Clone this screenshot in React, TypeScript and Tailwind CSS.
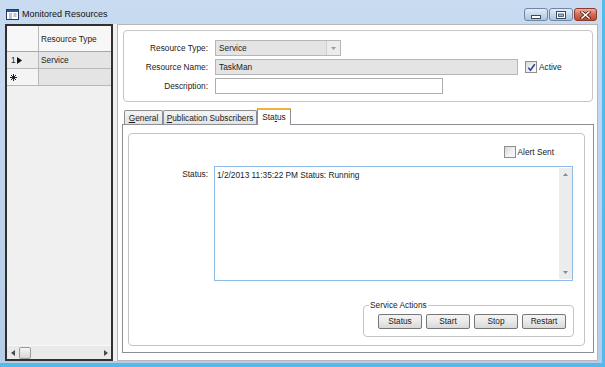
import type { ReactNode } from 'react'

// small Win7-style window: Monitored Resources

function CheckBox({ checked }: { checked?: boolean }) {
  return (
    <span className="w-[12px] h-[12px] border border-[#8e8f8f] bg-gradient-to-br from-[#d8d8d8] via-[#efefef] to-[#fbfbfb] flex items-center justify-center shrink-0">
      {checked && (
        <svg width="9" height="9" viewBox="0 0 9 9">
          <path d="M1.3 4.6 L3.4 7.2 L7.8 1.2" fill="none" stroke="#2c3f8c" strokeWidth="1.5" />
        </svg>
      )}
    </span>
  )
}

function ActionButton({ label }: { label: string }) {
  return (
    <button className="w-[44px] h-[15px] border border-[#767676] rounded-[2px] bg-gradient-to-b from-[#f4f4f4] via-[#eaeaea] to-[#d9d9d9] flex items-center justify-center leading-none text-[#1b1b1b]">
      {label}
    </button>
  )
}

function Tab({ children, width, selected }: { children: ReactNode; width: string; selected?: boolean }) {
  if (selected) {
    return (
      <div
        className={`${width} h-[17px] -mb-px relative z-10 bg-white border-x border-[#8c8e94] border-t-2 border-t-[#f2b33d] flex items-center justify-center pb-[1px]`}
      >
        {children}
      </div>
    )
  }
  return (
    <div
      className={`${width} h-[14px] border border-b-0 border-[#8c8e94] rounded-t-[2px] bg-gradient-to-b from-[#f4f4f4] to-[#e3e3e3] flex items-center justify-center`}
    >
      {children}
    </div>
  )
}

function TitleButton({ kind }: { kind: 'min' | 'max' | 'close' }) {
  const base =
    kind === 'close'
      ? 'w-[23px] border-[#8a3a2c] bg-gradient-to-b from-[#eab0a2] via-[#d36a52] to-[#c5452c]'
      : 'w-[24px] border-[#6f86a6] bg-gradient-to-b from-[#e3ecf7] via-[#c8d8ec] to-[#adc4e2]'
  return (
    <div className={`${base} h-[13px] border rounded-[3px] flex items-center justify-center`}>
      {kind === 'min' && (
        <svg width="10" height="4" viewBox="0 0 10 4" className="mt-[4px]">
          <rect x="0.5" y="0.5" width="9" height="3" fill="#ffffff" stroke="#3c4a5e" />
        </svg>
      )}
      {kind === 'max' && (
        <svg width="10" height="8" viewBox="0 0 10 8">
          <rect x="0.5" y="0.5" width="9" height="7" fill="#ffffff" stroke="#3c4a5e" />
          <rect x="2.5" y="3" width="5" height="2.5" fill="#9fb4d0" stroke="#3c4a5e" strokeWidth="0.8" />
        </svg>
      )}
      {kind === 'close' && (
        <svg width="11" height="8" viewBox="0 0 11 8">
          <path d="M2 1 L9 7 M9 1 L2 7" stroke="#4a1a12" strokeWidth="3" strokeLinecap="square" />
          <path d="M2 1 L9 7 M9 1 L2 7" stroke="#ffffff" strokeWidth="1.6" strokeLinecap="square" />
        </svg>
      )}
    </div>
  )
}

function ResourceGrid() {
  return (
    <div className="w-[108px] border-2 border-[#303030] bg-[#f0f0f0] flex flex-col">
      <div className="h-[26px] flex border-b border-[#a9a9a9] bg-[#f7f7f7]">
        <div className="w-[32px] border-r border-[#b9b9b9]" />
        <div className="flex-1 flex items-center pl-[2px]">Resource Type</div>
      </div>
      <div className="h-[17px] flex border-b border-[#b9b9b9]">
        <div className="w-[32px] border-r border-[#b9b9b9] bg-[#ececec] flex items-center pl-[4px] gap-[1px]">
          <span>1</span>
          <svg width="5" height="7" viewBox="0 0 5 7">
            <path d="M0 0 L5 3.5 L0 7 Z" fill="#111" />
          </svg>
        </div>
        <div className="flex-1 flex items-center pl-[2px] bg-[#e4e4e4]">Service</div>
      </div>
      <div className="h-[17px] flex border-b border-[#b9b9b9]">
        <div className="w-[32px] border-r border-[#b9b9b9] bg-[#f4f4f4] flex items-center pl-[3px]">
          <svg width="7" height="7" viewBox="0 0 7 7">
            <path d="M3.5 0 V7 M0 3.5 H7 M1 1 L6 6 M6 1 L1 6" stroke="#222" strokeWidth="1" />
          </svg>
        </div>
        <div className="flex-1 bg-[#e4e4e4]" />
      </div>
      <div className="flex-1" />
      <div className="h-[14px] border-t border-[#f8f8f8] bg-[#e9e9e9] flex items-center pl-[4px] pr-[3px]">
        <svg width="4" height="6" viewBox="0 0 4 6">
          <path d="M4 0 L0 3 L4 6 Z" fill="#4a4a4a" />
        </svg>
        <div className="ml-[4px] w-[12px] h-[12px] border border-[#9b9b9b] rounded-[2px] bg-gradient-to-b from-[#f5f5f5] to-[#d8d8d8]" />
        <div className="flex-1" />
        <svg width="4" height="6" viewBox="0 0 4 6">
          <path d="M0 0 L4 3 L0 6 Z" fill="#4a4a4a" />
        </svg>
      </div>
    </div>
  )
}

function HeaderGroup() {
  return (
    <div className="h-[72px] ml-[1px] mr-[1px] border border-[#c6c6c6] rounded-[4px] pt-[9px] flex flex-col gap-[3px]">
      <div className="flex items-center h-[16px]">
        <div className="w-[84px] text-right">Resource Type:</div>
        <div className="ml-[7px] w-[126px] h-[16px] border border-[#b6b6b6] bg-[#e4e4e4] flex">
          <div className="flex-1 flex items-center pl-[3px]">Service</div>
          <div className="w-[14px] border-l border-[#cfcfcf] bg-[#ececec] flex items-center justify-center">
            <svg width="5" height="3" viewBox="0 0 5 3">
              <path d="M0 0 L5 0 L2.5 3 Z" fill="#9a9a9a" />
            </svg>
          </div>
        </div>
      </div>
      <div className="flex items-center h-[16px]">
        <div className="w-[84px] text-right">Resource Name:</div>
        <div className="ml-[7px] w-[303px] h-[16px] border border-[#b6b6b6] bg-[#e4e4e4] flex items-center pl-[3px]">
          TaskMan
        </div>
        <div className="ml-[7px] flex items-center gap-[2px]">
          <CheckBox checked />
          <span>Active</span>
        </div>
      </div>
      <div className="flex items-center h-[16px]">
        <div className="w-[84px] text-right">Description:</div>
        <div className="ml-[7px] w-[228px] h-[16px] border border-[#acacac] bg-white" />
      </div>
    </div>
  )
}

function StatusPage() {
  return (
    <div className="flex-1 border border-[#8c8e94] bg-white pl-[5px] pt-[8px] pr-[8px] pb-[6px] flex">
      <div className="flex-1 border border-[#c4c4c4] rounded-[4px] flex flex-col">
        <div className="mt-[12px] h-[12px] flex justify-end items-center pr-[30px] gap-[2px]">
          <CheckBox />
          <span>Alert Sent</span>
        </div>
        <div className="mt-[8px] flex">
          <div className="w-[79px] text-right pt-[3px]">Status:</div>
          <div className="ml-[6px] w-[359px] h-[115px] border border-[#8fbbe8] flex">
            <div className="flex-1 pl-[2px] pt-[3px]">1/2/2013 11:35:22 PM Status: Running</div>
            <div className="w-[13px] mt-[1px] mb-[1px] bg-[#ececec] flex flex-col items-center justify-between py-[5px]">
              <svg width="5" height="3" viewBox="0 0 5 3">
                <path d="M0 3 L5 3 L2.5 0 Z" fill="#8a8a8a" />
              </svg>
              <svg width="5" height="3" viewBox="0 0 5 3">
                <path d="M0 0 L5 0 L2.5 3 Z" fill="#8a8a8a" />
              </svg>
            </div>
          </div>
        </div>
        <fieldset className="mt-[19px] self-end mr-[10px] w-[211px] border border-[#c4c4c4] rounded-[4px] pb-[7px]">
          <legend className="ml-[5px] px-[1px] leading-[10px]">Service Actions</legend>
          <div className="pl-[14px] pt-[4px] flex gap-[4px]">
            <ActionButton label="Status" />
            <ActionButton label="Start" />
            <ActionButton label="Stop" />
            <ActionButton label="Restart" />
          </div>
        </fieldset>
      </div>
    </div>
  )
}

export default function App() {
  return (
    <div className="w-[605px] h-[367px] flex flex-col overflow-hidden bg-gradient-to-b from-[#c8dbf0] via-[#bed4ec] to-[#b6cde8] border-r-[3px] border-b-[4px] border-[#54b9ec] font-['Liberation_Sans',Arial,sans-serif] text-[8.3px] leading-[10px] text-[#1b1b1b]">
      {/* title bar */}
      <div className="h-[24px] shrink-0 flex items-start pl-[6px] pr-[5px]">
        <svg width="13" height="11" viewBox="0 0 13 11" className="mt-[9px]">
          <rect x="0.5" y="0.5" width="12" height="10" fill="#ffffff" stroke="#243a6b" />
          <rect x="1" y="1" width="11" height="2" fill="#2f5597" />
          <path d="M3 5 H6 M3 7 H6 M3 9 H6 M7.5 5 H10.5 M7.5 7 H10.5" stroke="#7c8aa3" strokeWidth="1" />
        </svg>
        <span className="ml-[3px] mt-[9px] text-[9px] leading-[11px] text-[#111]">Monitored Resources</span>
        <div className="ml-auto mt-[8px] flex gap-[1px]">
          <TitleButton kind="min" />
          <TitleButton kind="max" />
          <TitleButton kind="close" />
        </div>
      </div>

      {/* client area */}
      <div className="flex-1 flex pl-[5px] pr-[4px] pb-[2px]">
        <ResourceGrid />
        <div className="w-[4px] bg-[#f0f0f0]" />
        <div className="w-[481px] border border-[#b7b7b7] bg-white pl-[4px] pr-[3px] pt-[5px] pb-[7px] flex flex-col">
          <HeaderGroup />
          <div className="mt-[6px] h-[16px] pl-[2px] flex items-end">
            <Tab width="w-[39px]">
              <span><span className="underline">G</span>eneral</span>
            </Tab>
            <Tab width="w-[94px]">
              <span><span className="underline">P</span>ublication Subscribers</span>
            </Tab>
            <Tab width="w-[34px]" selected>
              <span>Sta<span className="underline">t</span>us</span>
            </Tab>
          </div>
          <StatusPage />
        </div>
      </div>
    </div>
  )
}
